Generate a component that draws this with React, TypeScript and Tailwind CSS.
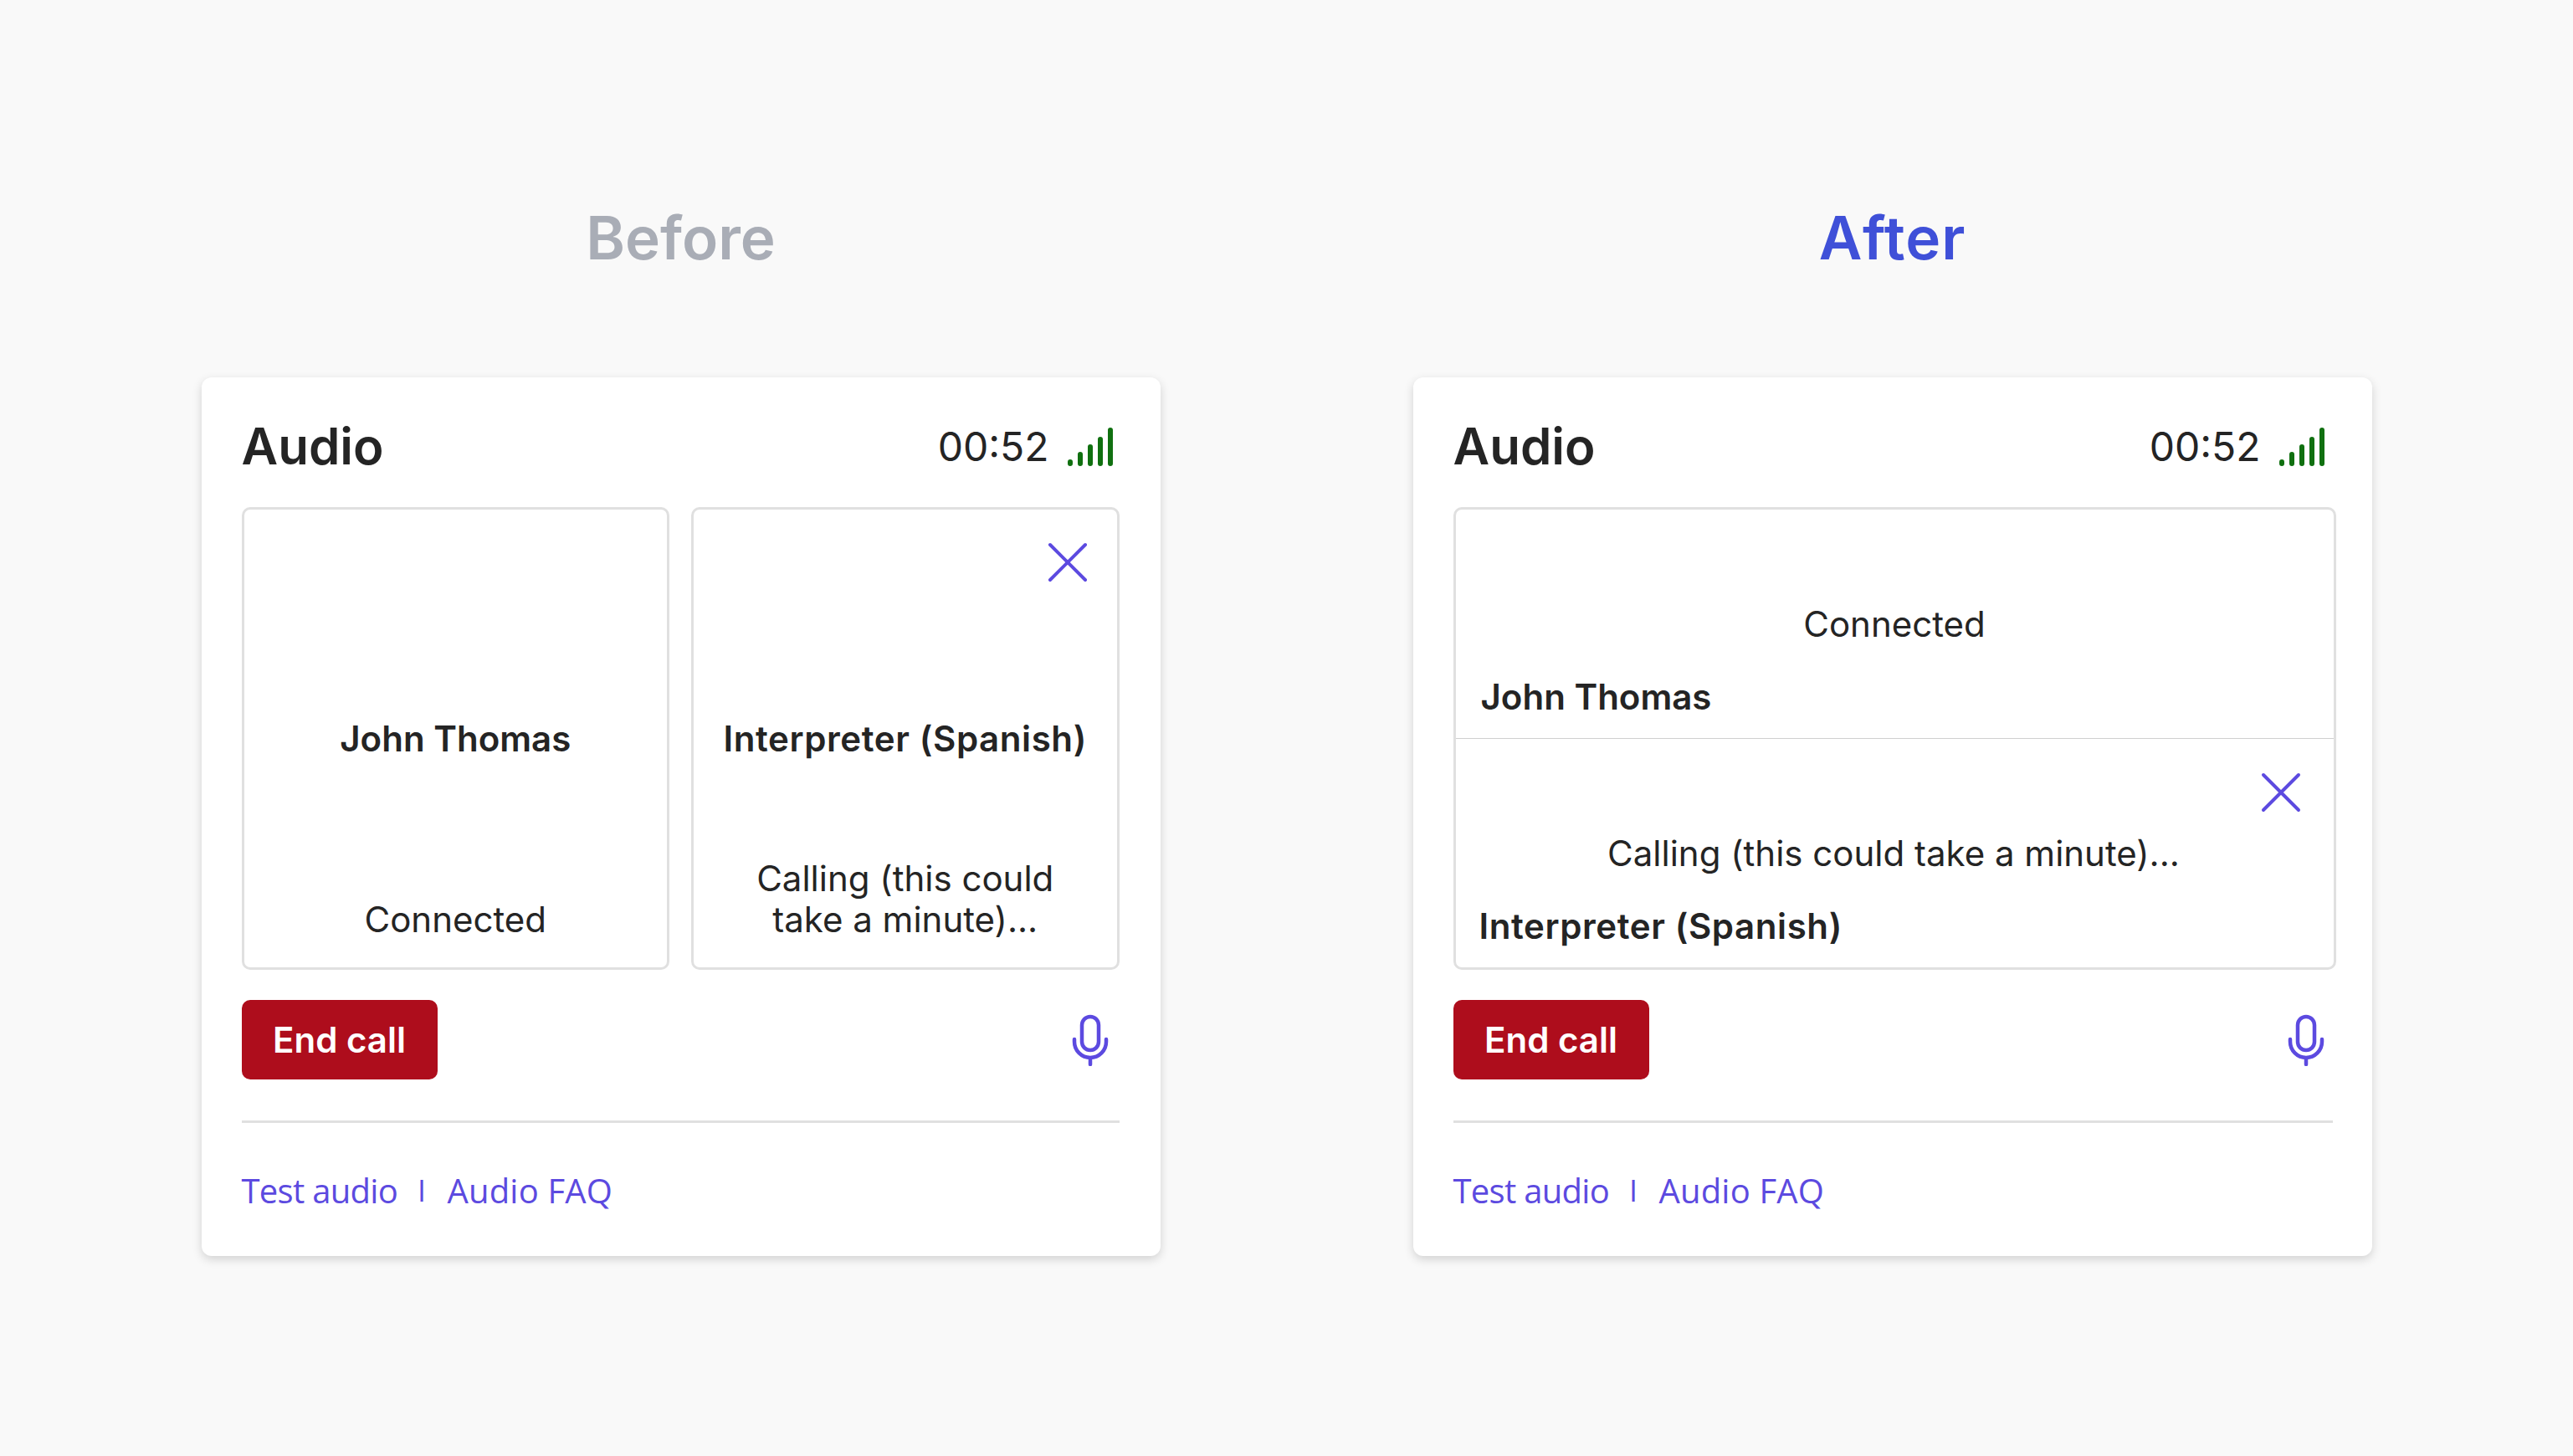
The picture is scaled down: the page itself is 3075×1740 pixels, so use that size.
import { ReactNode } from 'react';

const SignalBars = () => (
  <svg width="54" height="46" viewBox="0 0 54 46" fill="none" stroke="#107010" strokeWidth="6" strokeLinecap="round">
    <path d="M3 41v2M15 32v11M27 23v20M39 14v29M51 3v40" />
  </svg>
);

const CloseIcon = () => (
  <svg width="48" height="48" viewBox="0 0 48 48" fill="none" stroke="#5c4ae0" strokeWidth="4" strokeLinecap="round">
    <path d="M3 3l42 42M45 3L3 45" />
  </svg>
);

const MicIcon = () => (
  <svg width="44" height="62" viewBox="0 0 44 62" fill="none" stroke="#5c4ae0" strokeWidth="4.5" strokeLinecap="round">
    <rect x="12" y="3" width="20" height="40" rx="10" />
    <path d="M3 30v3a19 19 0 0 0 38 0v-3M22 52v8" />
  </svg>
);

const CardShell = ({ children, right }: { children: ReactNode; right: string }) => (
  <div className="w-[1146px] h-[1050px] bg-white rounded-[12px] shadow-[0_4px_12px_rgba(0,0,0,0.16)] pl-[48px] pt-[40px] flex flex-col" style={{ paddingRight: right }}>
    {children}
  </div>
);

const Header = ({ pad }: { pad: string }) => (
  <div className="flex items-center justify-between h-[84px] mb-[31px]" style={{ paddingRight: pad }}>
    <span className="font-['Inter',sans-serif] font-semibold text-[60px] text-[#242424]">Audio</span>
    <div className="flex items-center gap-[22px] mt-[2px]">
      <span className="font-['Inter',sans-serif] text-[48px] text-[#242424]">00:52</span>
      <SignalBars />
    </div>
  </div>
);

const Footer = ({ micPad }: { micPad: string }) => (
  <>
    <div className="flex items-center justify-between mt-[36px] h-[95px]">
      <button className="w-[234px] h-[95px] rounded-[10px] bg-[#ae0d1c] text-white font-['Inter',sans-serif] font-semibold text-[42px]">End call</button>
      <div style={{ paddingRight: micPad }}><MicIcon /></div>
    </div>
    <div className="h-[3px] bg-[#e0e0e0] mt-[49px]" />
    <div className="flex items-center gap-[24px] mt-[51px] font-['Open_Sans',sans-serif] text-[40px] tracking-[-0.7px] text-[#5c4ae0] leading-[60px]">
      <span>Test audio</span>
      <span className="text-[36px]">I</span>
      <span className="ml-[2px] tracking-[0.2px]">Audio FAQ</span>
    </div>
  </>
);

const Name = ({ children }: { children: ReactNode }) => (
  <div className="font-['Inter',sans-serif] font-semibold text-[42px] leading-[49px] text-[#242424]">{children}</div>
);

const Status = ({ children }: { children: ReactNode }) => (
  <div className="font-['Inter',sans-serif] text-[42px] leading-[49px] text-[#242424]">{children}</div>
);

const InterpreterName = () => <span className="tracking-[0.6px]">Interpreter (Spanish)</span>;

const BeforeTile = ({ name, status, close }: { name: ReactNode; status: ReactNode; close?: boolean }) => (
  <div className="relative flex-1 h-[553px] border-[3px] border-[#e0e0e0] rounded-[10px] flex flex-col items-center justify-between text-center pt-[249px] pb-[33px]">
    {close && <div className="absolute top-[39px] right-[35px]"><CloseIcon /></div>}
    <Name>{name}</Name>
    <Status>{status}</Status>
  </div>
);

const AfterRow = ({ name, status, close, pad }: { name: ReactNode; status: string; close?: boolean; pad: string }) => (
  <div className="relative h-[276px] flex flex-col justify-end pb-[25px]" style={{ paddingLeft: pad }}>
    {close && <div className="absolute top-[40px] right-[39px]"><CloseIcon /></div>}
    <div className="text-center mb-[38px] -ml-[30px]"><Status>{status}</Status></div>
    <Name>{name}</Name>
  </div>
);

export default function App() {
  return (
    <div className="w-[3075px] h-[1740px] bg-[#f9f9f9] flex justify-center gap-[302px] pt-[240px]">
      <div className="flex flex-col items-center">
        <h2 className="font-['Inter',sans-serif] font-semibold text-[71px] leading-[88px] text-[#a9adb6] mb-[123px]">Before</h2>
        <CardShell right="49px">
          <Header pad="8px" />
          <div className="flex gap-[26px]">
            <BeforeTile name="John Thomas" status="Connected" />
            <BeforeTile name={<InterpreterName />} status={<>Calling (this could<br />take a minute)...</>} close />
          </div>
          <Footer micPad="13px" />
        </CardShell>
      </div>
      <div className="flex flex-col items-center">
        <h2 className="font-['Inter',sans-serif] font-semibold text-[71px] tracking-[1px] leading-[88px] text-[#3f50d8] mb-[123px]">After</h2>
        <CardShell right="47px">
          <Header pad="10px" />
          <div className="h-[553px] -mr-[4px] border-[3px] border-[#e0e0e0] rounded-[10px] flex flex-col">
            <AfterRow name="John Thomas" status="Connected" pad="30px" />
            <div className="h-[2px] bg-[#d0d0d0]" />
            <AfterRow name={<InterpreterName />} status="Calling (this could take a minute)..." close pad="28px" />
          </div>
          <Footer micPad="10px" />
        </CardShell>
      </div>
    </div>
  );
}
